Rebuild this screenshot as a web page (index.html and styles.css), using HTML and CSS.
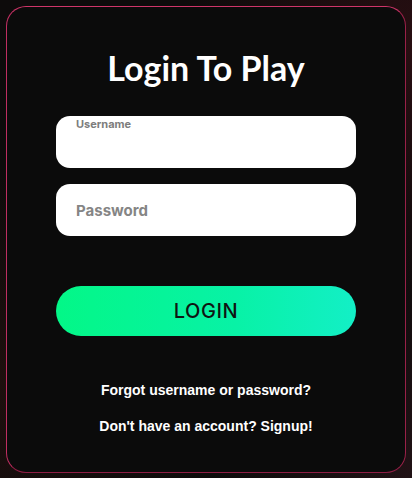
FILE: index.html
```html
<!DOCTYPE html>
<html lang="en">
<head>
<meta charset="utf-8">
<title>Login To Play</title>
<link rel="stylesheet" href="styles.css">
</head>
<body>
<div class="backdrop">
  <form class="card">
    <h1 class="title">Login To Play</h1>
    <label class="field field-filled">
      <span class="field-label">Username</span>
      <input class="field-input" type="text" name="username">
    </label>
    <label class="field">
      <input class="field-input" type="password" name="password" placeholder="Password">
    </label>
    <button class="login-btn" type="button">LOGIN</button>
    <div class="links">
      <a class="link" href="#">Forgot username or password?</a>
      <a class="link" href="#">Don't have an account? Signup!</a>
    </div>
  </form>
</div>
</body>
</html>
```
FILE: styles.css
```css
* { box-sizing: border-box; }
html, body {
  margin: 0;
  padding: 0;
  height: 100%;
}
body {
  background:
    radial-gradient(ellipse at 100% 10%, rgba(90, 20, 30, 0.35), transparent 40%),
    radial-gradient(ellipse at 0% 80%, rgba(70, 25, 20, 0.3), transparent 40%),
    radial-gradient(ellipse at 100% 100%, rgba(70, 30, 40, 0.35), transparent 35%),
    #0d0b0b;
  font-family: "Liberation Sans", Arial, sans-serif;
}
.backdrop {
  padding: 6px;
  height: 100%;
}
.card {
  width: 400px;
  height: 467px;
  border: 1px solid #c22f63;
  border-color: #cf3569 #9a2148 #8e1d44 #c02e61;
  border-radius: 20px;
  background: #0b0b0b;
  padding: 41px 0 0;
  display: flex;
  flex-direction: column;
  align-items: center;
}
.title {
  margin: 0;
  font-family: Lato, "Liberation Sans", sans-serif;
  font-weight: 700;
  font-size: 34px;
  line-height: 40px;
  color: #ffffff;
}
.field {
  position: relative;
  display: block;
  width: 300px;
  height: 52px;
  margin-top: 28px;
  background: #ffffff;
  border-radius: 14px;
}
.field + .field { margin-top: 16px; }
.field-label {
  position: absolute;
  left: 20px;
  top: 1px;
  font-family: Inter, "Noto Sans", sans-serif;
  font-weight: 700;
  font-size: 11px;
  color: #7d7d7d;
}
.field-input {
  width: 100%;
  height: 100%;
  border: 0;
  outline: none;
  background: transparent;
  padding: 0 20px;
  font-family: Inter, "Noto Sans", sans-serif;
  font-weight: 700;
  font-size: 15px;
  color: #333;
}
.field-input::placeholder { color: #858585; }
.login-btn {
  margin-top: 50px;
  width: 300px;
  height: 50px;
  border: 0;
  border-radius: 25px;
  background: linear-gradient(90deg, #03f787 0%, #08f2a6 60%, #13efc6 100%);
  font-family: Inter, "Noto Sans", sans-serif;
  font-weight: 500;
  font-size: 20px;
  letter-spacing: 0.6px;
  color: #0f1512;
  cursor: pointer;
}
.links {
  margin-top: 46px;
  display: flex;
  flex-direction: column;
  align-items: center;
  gap: 20px;
}
.link {
  font-family: "Liberation Sans", Arial, sans-serif;
  font-weight: 700;
  font-size: 14px;
  line-height: 16px;
  color: #ffffff;
  text-decoration: none;
}
```
